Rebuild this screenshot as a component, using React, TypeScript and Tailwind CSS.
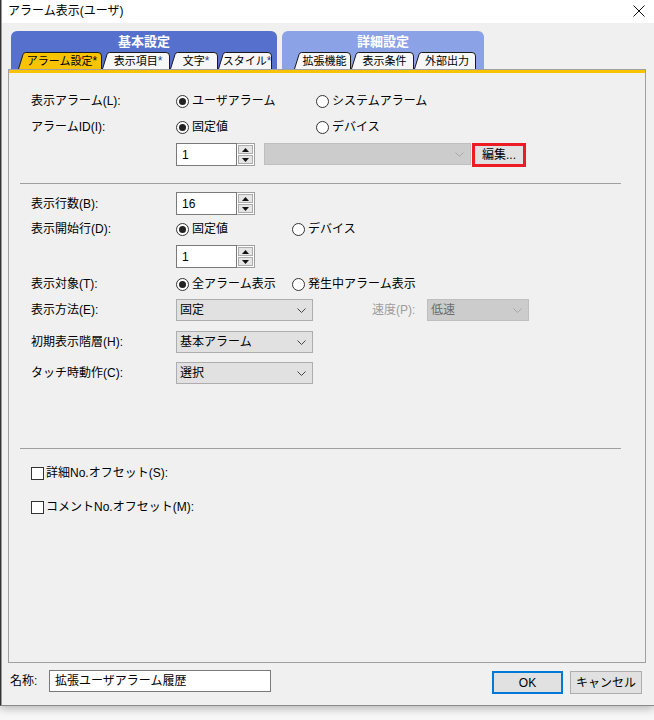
import React from 'react';

const font = "font-['Liberation_Sans','Noto_Sans_CJK_JP',sans-serif]";

function Radio({ checked, label }: { checked?: boolean; label: string }) {
  return (
    <span className="flex items-center gap-[3px] h-[20px]">
      <span className="w-[13px] h-[13px] rounded-full border border-[#333] bg-white flex items-center justify-center shrink-0">
        {checked && <span className="w-[7px] h-[7px] rounded-full bg-[#222]" />}
      </span>
      <span>{label}</span>
    </span>
  );
}

function Check({ label }: { label: string }) {
  return (
    <div className="flex items-center gap-[2px] h-[20px]">
      <span className="w-[13px] h-[13px] border border-[#333] bg-white shrink-0" />
      <span>{label}</span>
    </div>
  );
}

function Spinner({ value }: { value: string }) {
  return (
    <div className="flex h-[23px] w-[79px] shrink-0">
      <div className="flex-1 border border-[#7a7a7a] bg-white flex items-center pl-[5px]">{value}</div>
      <div className="w-[18px] flex flex-col border border-l-0 border-[#a0a0a0] bg-white p-[1px] gap-[1px]">
        <div className="flex-1 bg-[#e5e5e5] border border-[#adadad] flex items-center justify-center">
          <svg width="7" height="4" viewBox="0 0 7 4">
            <path d="M0 4 L3.5 0 L7 4 Z" fill="#111" />
          </svg>
        </div>
        <div className="flex-1 bg-[#e5e5e5] border border-[#adadad] flex items-center justify-center">
          <svg width="7" height="4" viewBox="0 0 7 4">
            <path d="M0 0 L3.5 4 L7 0 Z" fill="#111" />
          </svg>
        </div>
      </div>
    </div>
  );
}

function Chevron({ color }: { color: string }) {
  return (
    <svg width="9" height="5" viewBox="0 0 9 5" className="shrink-0">
      <path d="M0.5 0.5 L4.5 4.5 L8.5 0.5" fill="none" stroke={color} strokeWidth="1" />
    </svg>
  );
}

function Select({ value, className, disabled }: { value: string; className: string; disabled?: boolean }) {
  return (
    <div
      className={
        'h-[22px] flex items-center justify-between pl-[3px] pr-[6px] shrink-0 border ' +
        (disabled ? 'bg-[#cccccc] border-[#bfbfbf] text-[#6d6d6d] ' : 'bg-[#e1e1e1] border-[#adadad] ') +
        className
      }
    >
      <span>{value}</span>
      <Chevron color={disabled ? '#a6a6a6' : '#444'} />
    </div>
  );
}

function Tab({ label, star, w, className, active }: { label: string; star?: boolean; w: number; className: string; active?: boolean }) {
  const h = 17;
  const d = `M0.5 ${h} L5 2.5 Q5.8 0.5 7.5 0.5 L${w - 4} 0.5 Q${w - 0.5} 0.5 ${w - 0.5} 4 L${w - 0.5} ${h}`;
  return (
    <div className={'relative h-[17px] flex items-center justify-center pl-[4px] ' + className}>
      <svg className="absolute left-0 top-0" width={w} height={h}>
        <path d={d} fill={active ? '#f8c300' : '#f7f7f7'} stroke="#1a1a1a" strokeWidth="1" />
      </svg>
      <span className="relative text-[11px] leading-none whitespace-nowrap pt-[1px]">
        {label}
        {star && <span className={'text-[12px] ' + (active ? 'text-black' : 'text-[#2c3f95]')}>*</span>}
      </span>
    </div>
  );
}

function Label({ children }: { children: React.ReactNode }) {
  return <span className="w-[145px] shrink-0">{children}</span>;
}

function Separator() {
  return <div className="-ml-[11px] w-[601px] h-px bg-[#a0a0a0]" />;
}

export default function App() {
  return (
    <div className={'w-[654px] h-[720px] bg-[#f7f7f7] overflow-hidden text-[12px] text-black leading-none ' + font}>
      <div className="h-[706px] flex flex-col bg-[#f0f0f0] border-l border-l-[#333] border-b border-b-[#8a8a8a] shadow-[0_3px_8px_rgba(0,0,0,0.25)]">
        {/* title bar */}
        <div className="h-[23px] bg-white flex items-center justify-between pl-[6px] pr-[9px] pb-[2px] border-l border-l-[#9a9a9a]">
          <span className="text-[12px]">アラーム表示(ユーザ)</span>
          <svg width="12" height="12" viewBox="0 0 12 12">
            <path d="M0.5 0.5 L11.5 11.5 M11.5 0.5 L0.5 11.5" stroke="#111" strokeWidth="1" />
          </svg>
        </div>

        <div className="flex-1 flex flex-col border-l border-l-[#9a9a9a]">
          {/* tab groups */}
          <div className="flex pl-[9px] pt-[8px] gap-[5px]">
            <div className="w-[266px] h-[38px] bg-[#5571cd] rounded-t-[6px] flex flex-col">
              <div className="h-[22px] flex items-center justify-center text-white font-bold text-[13px]">基本設定</div>
              <div className="flex pl-[7px]">
                <Tab label="アラーム設定" star active w={84} className="w-[84px]" />
                <Tab label="表示項目" star w={68} className="w-[68px]" />
                <Tab label="文字" star w={48} className="w-[48px]" />
                <Tab label="スタイル" star w={54} className="w-[54px]" />
              </div>
            </div>
            <div className="w-[202px] h-[38px] bg-[#8ca2e6] rounded-t-[6px] flex flex-col">
              <div className="h-[22px] flex items-center justify-center text-white font-bold text-[13px]">詳細設定</div>
              <div className="flex pl-[12px]">
                <Tab label="拡張機能" w={57} className="w-[57px]" />
                <Tab label="表示条件" w={63} className="w-[63px]" />
                <Tab label="外部出力" w={62} className="w-[62px]" />
              </div>
            </div>
          </div>

          {/* panel */}
          <div className="ml-[6px] w-[638px] h-[594px] border border-[#a0a0a0] border-t-0 flex flex-col">
            <div className="h-[4px] bg-[#f8c300] border-t border-t-[#a0a0a0]" />
            <div className="flex flex-col pl-[22px] pt-[18px]">
              <div className="flex items-center h-[20px]">
                <Label>表示アラーム(L):</Label>
                <span className="w-[140px]"><Radio checked label="ユーザアラーム" /></span>
                <Radio label="システムアラーム" />
              </div>
              <div className="flex items-center h-[20px] mt-[6px]">
                <Label>アラームID(I):</Label>
                <span className="w-[140px]"><Radio checked label="固定値" /></span>
                <Radio label="デバイス" />
              </div>
              <div className="flex items-start h-[24px] mt-[6px]">
                <Label>{''}</Label>
                <Spinner value="1" />
                <div className="ml-[9px] w-[207px] h-[22px] bg-[#cccccc] border border-[#bfbfbf] flex items-center justify-end pr-[6px]">
                  <Chevron color="#a6a6a6" />
                </div>
                <div className="ml-[1px] w-[54px] h-[24px] border-[3px] border-[#ed1c24] bg-[#e1e1e1] flex items-center justify-center">
                  編集...
                </div>
              </div>
              <div className="mt-[16px]">
                <Separator />
              </div>
              <div className="flex items-center h-[23px] mt-[8px]">
                <Label>表示行数(B):</Label>
                <Spinner value="16" />
              </div>
              <div className="flex items-center h-[20px] mt-[4px]">
                <Label>表示開始行(D):</Label>
                <span className="w-[116px]"><Radio checked label="固定値" /></span>
                <Radio label="デバイス" />
              </div>
              <div className="flex items-center h-[23px] mt-[6px]">
                <Label>{''}</Label>
                <Spinner value="1" />
              </div>
              <div className="flex items-center h-[20px] mt-[6px]">
                <Label>表示対象(T):</Label>
                <span className="w-[116px]"><Radio checked label="全アラーム表示" /></span>
                <Radio label="発生中アラーム表示" />
              </div>
              <div className="flex items-center h-[22px] mt-[5px]">
                <Label>表示方法(E):</Label>
                <Select value="固定" className="w-[137px]" />
                <span className="ml-[59px] w-[55px] text-[#9d9d9d]">速度(P):</span>
                <Select value="低速" className="w-[102px]" disabled />
              </div>
              <div className="flex items-center h-[22px] mt-[10px]">
                <Label>初期表示階層(H):</Label>
                <Select value="基本アラーム" className="w-[137px]" />
              </div>
              <div className="flex items-center h-[22px] mt-[9px]">
                <Label>タッチ時動作(C):</Label>
                <Select value="選択" className="w-[137px]" />
              </div>
              <div className="mt-[64px]">
                <Separator />
              </div>
              <div className="mt-[14px]">
                <Check label="詳細No.オフセット(S):" />
              </div>
              <div className="mt-[14px]">
                <Check label="コメントNo.オフセット(M):" />
              </div>
            </div>
          </div>

          {/* bottom row */}
          <div className="flex items-start pl-[8px] pr-[12px] pt-[7px]">
            <span className="w-[39px] h-[22px] flex items-center">名称:</span>
            <div className="w-[222px] h-[22px] border border-[#7a7a7a] bg-white flex items-center pl-[5px]">
              拡張ユーザアラーム履歴
            </div>
            <div className="ml-auto mt-[1px] flex gap-[7px]">
              <div className="w-[71px] h-[23px] border-2 border-[#0078d7] bg-[#e1e1e1] flex items-center justify-center">OK</div>
              <div className="w-[72px] h-[23px] border border-[#adadad] bg-[#e1e1e1] flex items-center justify-center">キャンセル</div>
            </div>
          </div>
        </div>
      </div>
    </div>
  );
}
